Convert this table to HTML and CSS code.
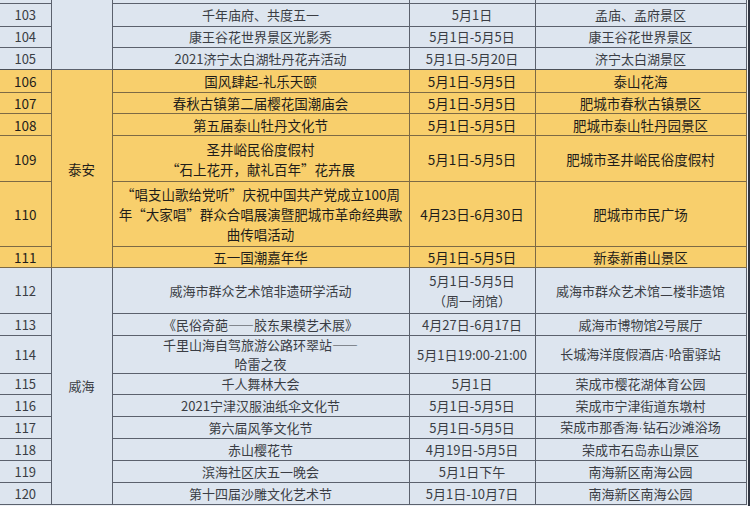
FILE: index.html
```html
<!DOCTYPE html>
<html lang="zh">
<head>
<meta charset="utf-8">
<link rel="stylesheet" href="styles.css">
</head>
<body>
<div class="frame">
<table class="sheet">
  <colgroup>
    <col class="c-no"><col class="c-city"><col class="c-name"><col class="c-date"><col class="c-place">
  </colgroup>
  <tbody>
    <tr class="blue r-top"><td></td><td class="city" rowspan="4"></td><td></td><td></td><td></td></tr>
    <tr class="blue r23"><td>103</td><td>千年庙府、共度五一</td><td>5月1日</td><td>孟庙、孟府景区</td></tr>
    <tr class="blue r21"><td>104</td><td>康王谷花世界景区光影秀</td><td>5月1日-5月5日</td><td>康王谷花世界景区</td></tr>
    <tr class="blue r22 last-blue"><td>105</td><td>2021济宁太白湖牡丹花卉活动</td><td>5月1日-5月20日</td><td>济宁太白湖景区</td></tr>

    <tr class="yellow r23"><td>106</td><td class="city" rowspan="6">泰安</td><td>国风肆起-礼乐天颐</td><td>5月1日-5月5日</td><td>泰山花海</td></tr>
    <tr class="yellow r21"><td>107</td><td>春秋古镇第二届樱花国潮庙会</td><td>5月1日-5月5日</td><td>肥城市春秋古镇景区</td></tr>
    <tr class="yellow r22"><td>108</td><td>第五届泰山牡丹文化节</td><td>5月1日-5月5日</td><td>肥城市泰山牡丹园景区</td></tr>
    <tr class="yellow r46"><td>109</td><td class="two">圣井峪民俗度假村<br>“石上花开，献礼百年”花卉展</td><td>5月1日-5月5日</td><td>肥城市圣井峪民俗度假村</td></tr>
    <tr class="yellow r65"><td>110</td><td class="wide">“唱支山歌给党听”庆祝中国共产党成立100周<br>年“大家唱”群众合唱展演暨肥城市革命经典歌<br>曲传唱活动</td><td>4月23日-6月30日</td><td>肥城市市民广场</td></tr>
    <tr class="yellow r21"><td>111</td><td>五一国潮嘉年华</td><td>5月1日-5月5日</td><td>新泰新甫山景区</td></tr>

    <tr class="blue r46"><td>112</td><td class="city" rowspan="9">威海</td><td>威海市群众艺术馆非遗研学活动</td><td class="two">5月1日-5月5日<br>（周一闭馆）</td><td>威海市群众艺术馆二楼非遗馆</td></tr>
    <tr class="blue r22"><td>113</td><td>《民俗奇葩——胶东果模艺术展》</td><td>4月27日-6月17日</td><td>威海市博物馆2号展厅</td></tr>
    <tr class="blue r38"><td>114</td><td class="tight">千里山海自驾旅游公路环翠站——<br>哈雷之夜</td><td>5月1日19:00-21:00</td><td>长城海洋度假酒店<span class="dot">·</span>哈雷驿站</td></tr>
    <tr class="blue r21"><td>115</td><td>千人舞林大会</td><td>5月1日</td><td>荣成市樱花湖体育公园</td></tr>
    <tr class="blue r22"><td>116</td><td>2021宁津汉服油纸伞文化节</td><td>5月1日-5月5日</td><td>荣成市宁津街道东墩村</td></tr>
    <tr class="blue r22"><td>117</td><td>第六届风筝文化节</td><td>5月1日-5月5日</td><td>荣成市那香海<span class="dot">·</span>钻石沙滩浴场</td></tr>
    <tr class="blue r22"><td>118</td><td>赤山樱花节</td><td>4月19日-5月5日</td><td>荣成市石岛赤山景区</td></tr>
    <tr class="blue r22"><td>119</td><td>滨海社区庆五一晚会</td><td>5月1日下午</td><td>南海新区南海公园</td></tr>
    <tr class="blue r22"><td>120</td><td>第十四届沙雕文化艺术节</td><td>5月1日-10月7日</td><td>南海新区南海公园</td></tr>
  </tbody>
</table>
</div>
</body>
</html>
```

FILE: styles.css
```css
html, body {
  margin: 0;
  padding: 0;
  background: #eef1f5;
}

.frame {
  width: 746px;
  height: 506px;
  padding-right: 2px;
  border-right: 2px solid #2f3440;
  background: #eef1f5;
  overflow: hidden;
}

.sheet {
  width: 746px;
  border-collapse: collapse;
  table-layout: fixed;
  font-family: "Noto Sans CJK SC", "Noto Sans", sans-serif;
  font-size: 13px;
  line-height: 18px;
  color: #3a3d44;
}

.c-no { width: 51px; }
.c-city { width: 61px; }
.c-name { width: 297px; }
.c-date { width: 126px; }
.c-place { width: 211px; }

.sheet td {
  padding: 0 2px;
  text-align: center;
  vertical-align: middle;
  white-space: nowrap;
  border: 1px solid #5b616d;
  overflow: hidden;
}

.sheet tr > td:first-child { border-left: none; }
.sheet tr:first-child > td { border-top: none; }

.blue td { background: #dde5ef; }

.yellow td {
  background: #f8cf6c;
  color: #1f1d1a;
  border-color: #7d6a45;
  font-size: 13.5px;
}

.last-blue td { border-bottom-color: #4a4f58; }

.dot {
  font-family: "Liberation Sans", sans-serif;
}

.r-top td { height: 3px; }
.r21 td { height: 20px; }
.r22 td { height: 21px; }
.r23 td { height: 22px; }
.r38 td { height: 37px; }
.r46 td { height: 45px; }
.r65 td { height: 64px; }

.sheet td.city { height: auto; }

.sheet td.two { line-height: 20px; }
.sheet td.wide { line-height: 20px; padding: 0; }
.sheet td.tight { line-height: 18.5px; }
```
